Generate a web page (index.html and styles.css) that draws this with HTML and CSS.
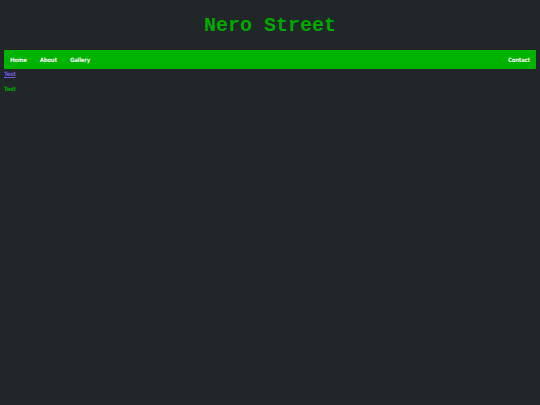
FILE: index.html
```html
<!DOCTYPE html>
<html>
<head>
<meta charset="utf-8">
<link rel="stylesheet" href="styles.css">
</head>
<body>
<header class="site-header">
  <h1 class="title">Nero Street</h1>
</header>
<nav class="nav">
  <div class="nav-left">
    <a class="nav-link" href="#">Home</a>
    <a class="nav-link" href="#">About</a>
    <a class="nav-link" href="#">Gallery</a>
  </div>
  <a class="nav-link" href="#">Contact</a>
</nav>
<main class="content">
  <a class="link" href="#">Test</a>
  <p class="green">Test</p>
</main>
</body>
</html>
```
FILE: styles.css
```css
html, body {
  margin: 0;
  padding: 0;
  background: #212729;
  height: 100%;
}
body {
  padding: 0 4px;
  font-family: "DejaVu Sans Condensed", "DejaVu Sans", sans-serif;
}
.site-header {
  height: 50px;
  display: flex;
  align-items: center;
  justify-content: center;
}
.title {
  margin: 0;
  font-family: "Liberation Mono", monospace;
  font-weight: bold;
  font-size: 20px;
  color: #00a800;
}
.nav {
  background: #00b300;
  height: 19px;
  display: flex;
  align-items: center;
  justify-content: space-between;
  padding: 0 6px;
}
.nav-left {
  display: flex;
  gap: 13px;
}
.nav-link {
  color: #f2f2f2;
  text-decoration: none;
  font-weight: bold;
  font-size: 6px;
  letter-spacing: -0.2px;
}
.content {
  display: flex;
  flex-direction: column;
  align-items: flex-start;
}
.link {
  margin-top: 1px;
  color: #6a5ad8;
  font-weight: bold;
  font-size: 6px;
  letter-spacing: -0.2px;
}
.green {
  margin: 8px 0 0;
  color: #00a800;
  font-weight: bold;
  font-size: 6px;
  letter-spacing: -0.2px;
}
```
